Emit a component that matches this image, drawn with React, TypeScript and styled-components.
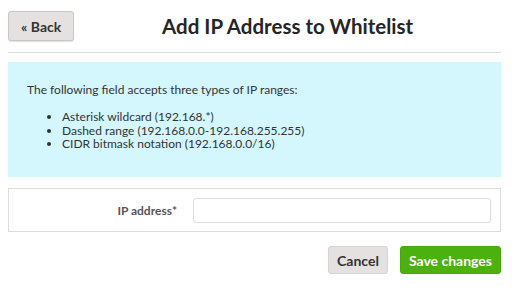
import styled, { createGlobalStyle } from 'styled-components'

const Global = createGlobalStyle`
    body {
        margin: 0;
        background: #fff;
        font-family: Lato, "Open Sans", sans-serif;
        color: #333;
    }
`

const Page = styled.div`
    padding: 11px 11px 0 8px;
    width: 512px;
    box-sizing: border-box;
`

const Header = styled.div`
    display: flex;
    align-items: center;
    padding-bottom: 11px;
    border-bottom: 1px solid #dcdcdc;
`

const Button = styled.button<{ $variant?: 'default' | 'success' }>`
    font-family: inherit;
    font-weight: 700;
    font-size: 14px;
    height: 28px;
    padding: 0 8px;
    border-radius: 3px;
    cursor: pointer;
    border: 1px solid ${p => (p.$variant === 'success' ? '#48a90c' : '#d6d3d2')};
    background: ${p => (p.$variant === 'success' ? '#4bb10c' : '#e4e1e0')};
    color: ${p => (p.$variant === 'success' ? '#fff' : '#333')};
`

const BackButton = styled(Button)`
    height: 30px;
    padding: 0 12px;
    border-color: #c9c6c5;
    box-shadow: 0 1px 1px rgba(0, 0, 0, 0.12);
`

const Title = styled.h1`
    flex: 1;
    margin: 0;
    text-align: center;
    font-size: 20.5px;
    font-weight: 700;
    color: #252525;
`

const InfoBox = styled.div`
    margin-top: 9px;
    background: #d3f7fd;
    padding: 20px 19px 0;
    font-size: 12px;
    height: 115px;
    box-sizing: border-box;
`

const Intro = styled.p`
    margin: 0 0 13px;
`

const List = styled.ul`
    margin: 0;
    padding-left: 35px;
    line-height: 13.5px;
`

const FormBox = styled.div`
    margin-top: 11px;
    border: 1px solid #dcdcdc;
    height: 44px;
    box-sizing: border-box;
    display: grid;
    grid-template-columns: 168px 1fr;
    column-gap: 16px;
    align-items: center;
    padding-right: 9px;
`

const Label = styled.label`
    text-align: right;
    font-size: 12px;
    font-weight: 700;
    color: #555;
`

const Input = styled.input`
    height: 25px;
    box-sizing: border-box;
    border: 1px solid #dcdcdc;
    border-radius: 3px;
    font-family: inherit;
`

const Actions = styled.div`
    display: flex;
    justify-content: flex-end;
    gap: 12px;
    margin-top: 14px;
`

export default function App() {
    return (
        <>
            <Global />
            <Page>
                <Header>
                    <BackButton>« Back</BackButton>
                    <Title>Add IP Address to Whitelist</Title>
                </Header>
                <InfoBox>
                    <Intro>The following field accepts three types of IP ranges:</Intro>
                    <List>
                        <li>Asterisk wildcard (192.168.*)</li>
                        <li>Dashed range (192.168.0.0-192.168.255.255)</li>
                        <li>CIDR bitmask notation (192.168.0.0/16)</li>
                    </List>
                </InfoBox>
                <FormBox>
                    <Label htmlFor="ip">IP address*</Label>
                    <Input id="ip" />
                </FormBox>
                <Actions>
                    <Button>Cancel</Button>
                    <Button $variant="success">Save changes</Button>
                </Actions>
            </Page>
        </>
    )
}
